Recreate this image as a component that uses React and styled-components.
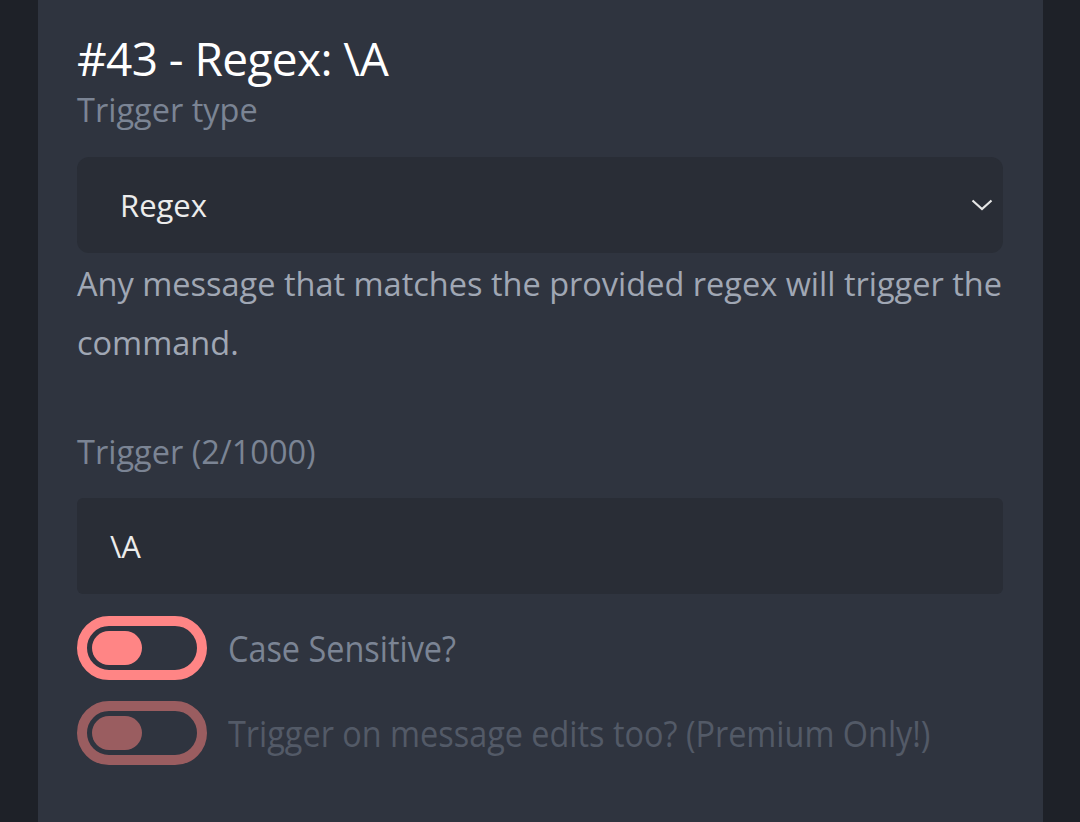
import React from "react";
import styled, { createGlobalStyle } from "styled-components";

const GlobalStyle = createGlobalStyle`
  html, body {
    margin: 0;
    padding: 0;
    background: #1e2128;
  }
  body {
    font-family: "Open Sans", "Noto Sans", sans-serif;
  }
`;

const Page = styled.div`
  display: flex;
  justify-content: flex-start;
  height: 822px;
  overflow: hidden;
  padding-left: 38px;
`;

const Panel = styled.div`
  width: 1005px;
  background: #2f343f;
  padding: 28px 40px 0 39px;
  box-sizing: border-box;
  display: flex;
  flex-direction: column;
`;

const Title = styled.h1`
  margin: 0;
  font-size: 46px;
  font-weight: 500;
  letter-spacing: -0.6px;
  line-height: 60px;
  color: #ffffff;
`;

const Label = styled.div`
  font-size: 32.5px;
  line-height: 44px;
  color: #7b8494;
  margin-top: ${(p) => p.top || 0}px;
`;

const Field = styled.div`
  height: 96px;
  margin-top: ${(p) => p.top || 0}px;
  background: #292d36;
  border-radius: ${(p) => (p.round ? 12 : 6)}px;
  display: flex;
  align-items: center;
  justify-content: space-between;
  padding: 0 10px 0 ${(p) => p.indent}px;
  box-sizing: border-box;
  font-size: 31px;
  color: #ececec;
`;

const Chevron = () => (
  <svg width="22" height="14" viewBox="0 0 22 14" fill="none">
    <path d="M1.5 2.5 L11 11 L20.5 2.5" stroke="#e6e6e6" strokeWidth="2.2" />
  </svg>
);

const Help = styled.p`
  margin: 1px 0 0;
  font-size: 32.5px;
  line-height: 59px;
  color: #a0a7b4;
`;

const ToggleRow = styled.div`
  display: flex;
  align-items: center;
  margin-top: ${(p) => p.top}px;
  height: 64px;
`;

const Switch = styled.div`
  width: 130px;
  height: 64px;
  box-sizing: border-box;
  border: 10px solid ${(p) => (p.faded ? "#9a5d60" : "#ff8585")};
  border-radius: 32px;
  padding: 5px;
  flex-shrink: 0;
`;

const Knob = styled.div`
  width: 50px;
  height: 34px;
  border-radius: 17px;
  background: ${(p) => (p.faded ? "#9a5d60" : "#ff8585")};
`;

const ToggleText = styled.span`
  margin-left: 21px;
  font-size: 36px;
  color: ${(p) => (p.faded ? "#535a67" : "#7b8494")};
  transform: scaleX(0.9);
  transform-origin: left center;
  white-space: nowrap;
`;

export default function App() {
  return (
    <>
      <GlobalStyle />
      <Page>
        <Panel>
          <Title>#43 - Regex: \A</Title>
          <Label>Trigger type</Label>
          <Field top={25} round indent={43}>
            <span>Regex</span>
            <Chevron />
          </Field>
          <Help>
            Any message that matches the provided regex will trigger the
            command.
          </Help>
          <Label top={58}>Trigger (2/1000)</Label>
          <Field top={24} indent={33}>
            <span>\A</span>
          </Field>
          <ToggleRow top={22}>
            <Switch>
              <Knob />
            </Switch>
            <ToggleText>Case Sensitive?</ToggleText>
          </ToggleRow>
          <ToggleRow top={21}>
            <Switch faded>
              <Knob faded />
            </Switch>
            <ToggleText faded>
              Trigger on message edits too? (Premium Only!)
            </ToggleText>
          </ToggleRow>
        </Panel>
      </Page>
    </>
  );
}
